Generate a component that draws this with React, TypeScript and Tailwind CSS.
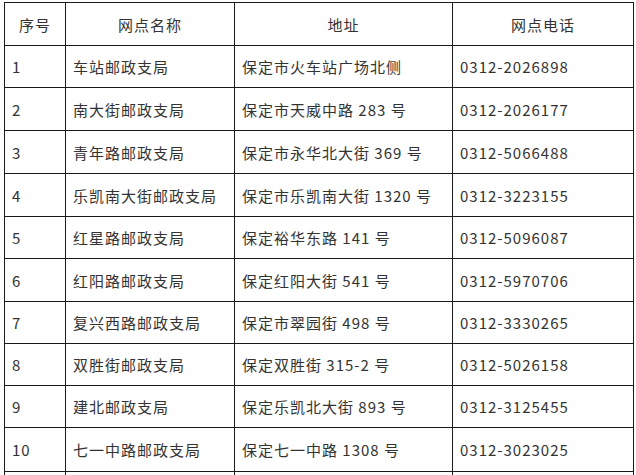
import React from "react";

const rows: [string, string, string, string, string][] = [
  ["1", "车站邮政支局", "保定市火车站广场北侧", "0312-2026898", "h-[42px]"],
  ["2", "南大街邮政支局", "保定市天威中路 283 号", "0312-2026177", "h-[43px]"],
  ["3", "青年路邮政支局", "保定市永华北大街 369 号", "0312-5066488", "h-[43px]"],
  ["4", "乐凯南大街邮政支局", "保定市乐凯南大街 1320 号", "0312-3223155", "h-[43px]"],
  ["5", "红星路邮政支局", "保定裕华东路 141 号", "0312-5096087", "h-[42px]"],
  ["6", "红阳路邮政支局", "保定红阳大街 541 号", "0312-5970706", "h-[43px]"],
  ["7", "复兴西路邮政支局", "保定市翠园街 498 号", "0312-3330265", "h-[42px]"],
  ["8", "双胜街邮政支局", "保定双胜街 315-2 号", "0312-5026158", "h-[42px]"],
  ["9", "建北邮政支局", "保定乐凯北大街 893 号", "0312-3125455", "h-[42px]"],
  ["10", "七一中路邮政支局", "保定七一中路 1308 号", "0312-3023025", "h-[44px]"],
];

export default function App() {
  const cell = "border border-[#1a1a1a] px-[7px] align-middle";
  return (
    <div className="w-[636px] h-[475px] overflow-hidden bg-white pl-[4px] pt-[2px]">
      <table
        className="table-fixed border-collapse w-[629px] text-[15px] tracking-[1px] text-[#333] leading-none"
        style={{ fontFamily: '"Microsoft YaHei", "Noto Sans CJK SC", "Noto Sans", sans-serif' }}
      >
        <colgroup>
          <col className="w-[61px]" />
          <col className="w-[169px]" />
          <col className="w-[218px]" />
          <col className="w-[181px]" />
        </colgroup>
        <tbody>
          <tr className="h-[43px]">
            <td className={`${cell} text-center`}>序号</td>
            <td className={`${cell} text-center`}>网点名称</td>
            <td className={`${cell} text-center`}>地址</td>
            <td className={`${cell} text-center`}>网点电话</td>
          </tr>
          {rows.map((r) => (
            <tr key={r[0]} className={r[4]}>
              <td className={cell}>{r[0]}</td>
              <td className={cell}>{r[1]}</td>
              <td className={cell}>{r[2]}</td>
              <td className={cell}>{r[3]}</td>
            </tr>
          ))}
          <tr className="h-[43px]">
            <td className={cell}></td>
            <td className={cell}></td>
            <td className={cell}></td>
            <td className={cell}></td>
          </tr>
        </tbody>
      </table>
    </div>
  );
}
